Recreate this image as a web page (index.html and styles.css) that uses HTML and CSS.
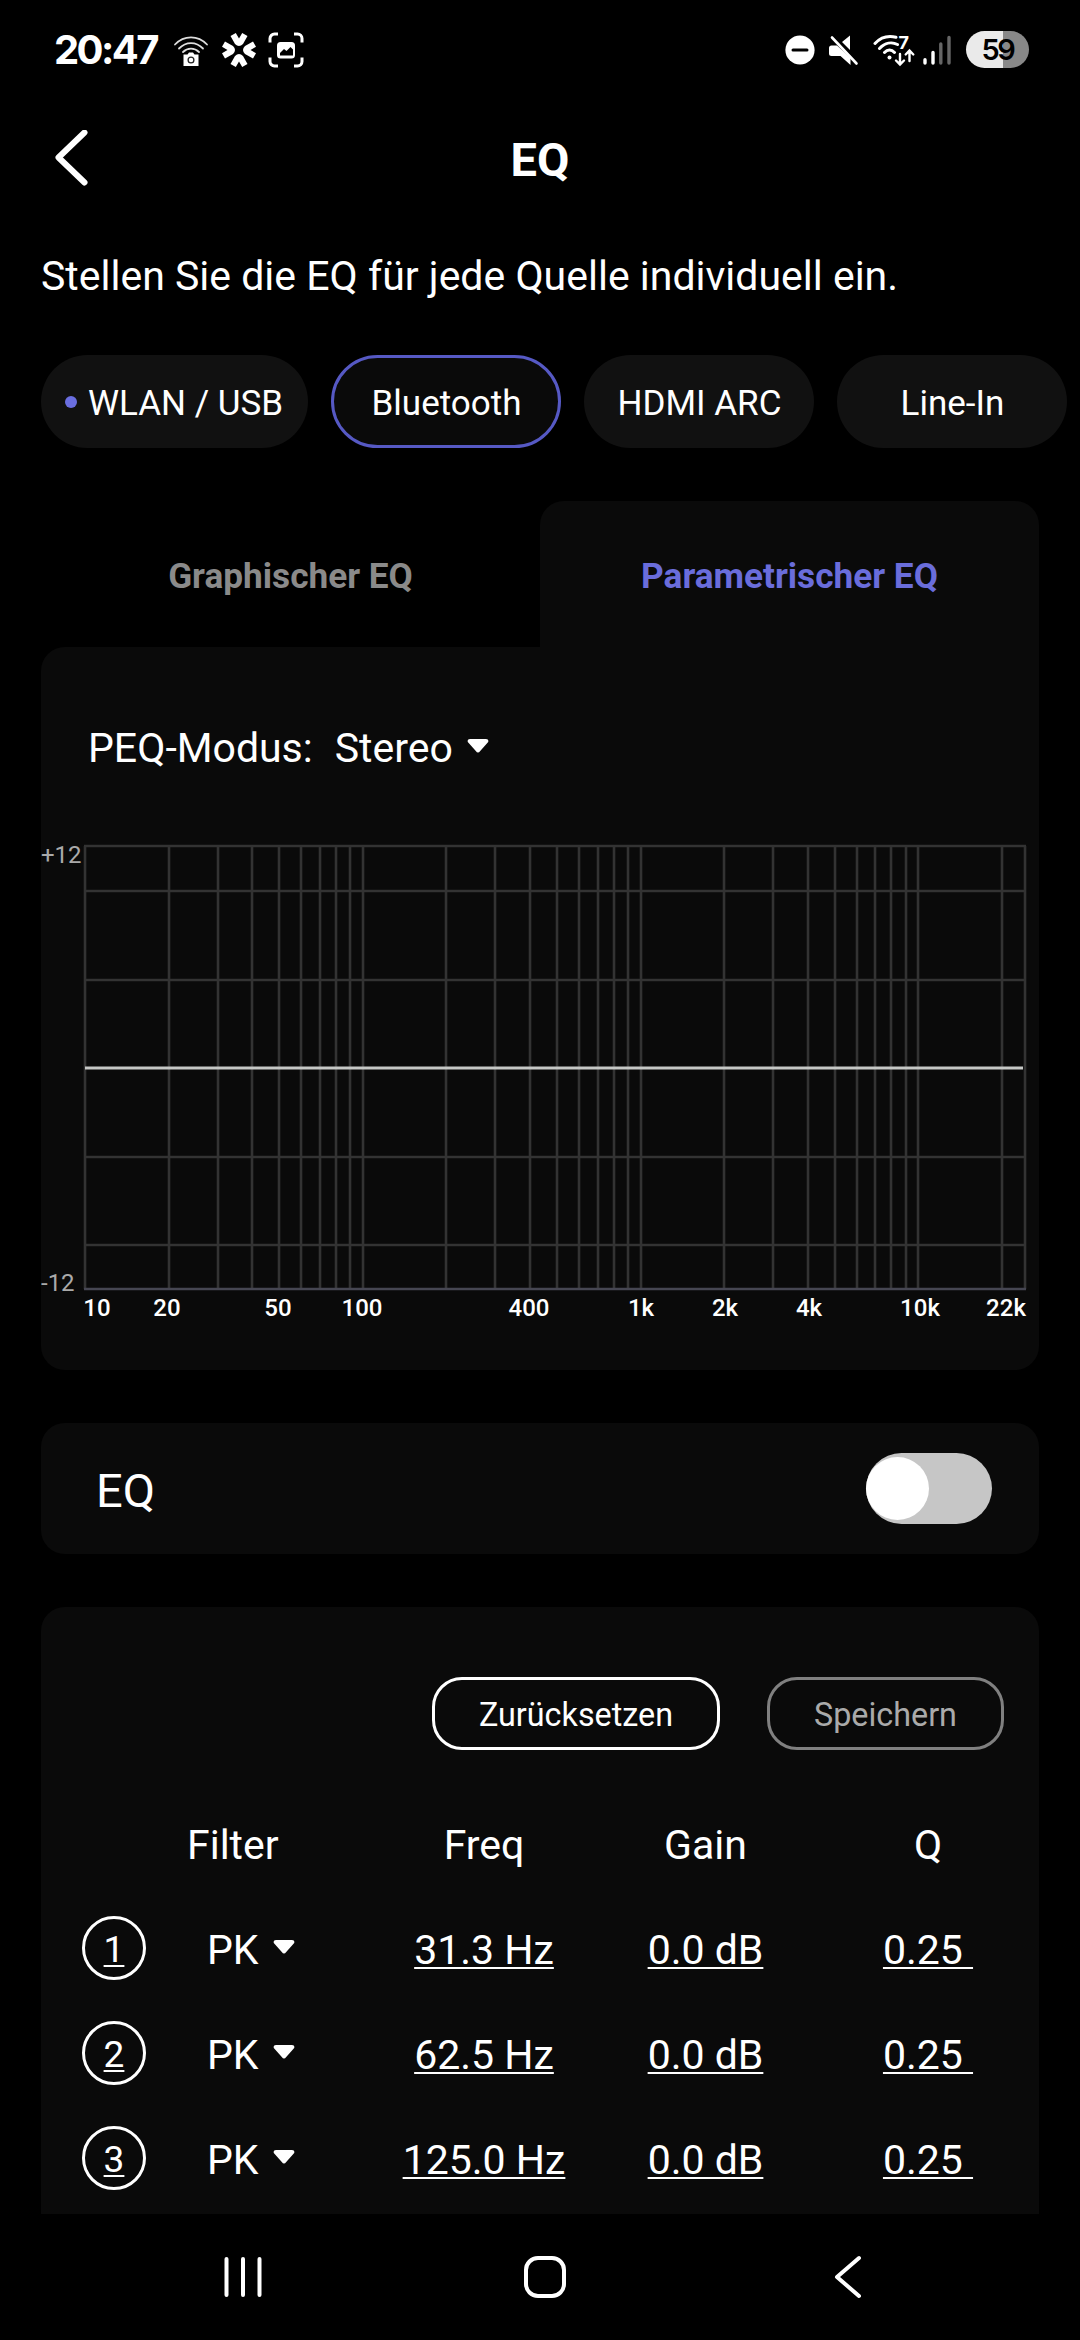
FILE: index.html
```html
<!DOCTYPE html>
<html lang="de">
<head>
    <meta charset="UTF-8">
    <meta name="viewport" content="width=device-width, initial-scale=1.0">
    <title>EQ</title>
    <link rel="stylesheet" href="styles.css">
</head>
<body>
    <!-- Status bar -->
    <div class="status-bar">
        <div class="status-left">
            <span class="clock">20:47</span>
            <svg class="icon-camera" width="36" height="36" viewBox="0 0 36 36" fill="none" stroke="#ddd" stroke-width="1.800" stroke-linecap="round">
                <path d="M2 12.500C11 3 25 3 34 12.500M6 16.500C13 9.300 23 9.300 30 16.500M10 20C14.500 15.500 21.500 15.500 26 20"/>
                <path d="M11 22.500h3.500l1.500-2h4l1.500 2H25.500v11.500H10.500V22.500z" fill="#fff" stroke="none"/>
                <circle cx="18" cy="28" r="2.900" stroke="#222" stroke-width="1.300"/>
            </svg>
            <svg class="icon-star" width="36" height="36" viewBox="0 0 36 36" fill="#fff">
                <path id="arrowhead" d="M9.500 4L14.800 1L18 6.500L21.200 1L26.500 4L22 12Q18 16 14 12Z"/>
                <use href="#arrowhead" transform="rotate(90 18 18)"/>
                <use href="#arrowhead" transform="rotate(180 18 18)"/>
                <use href="#arrowhead" transform="rotate(270 18 18)"/>
            </svg>
            <svg class="icon-capture" width="36" height="36" viewBox="0 0 36 36" fill="none" stroke="#fff" stroke-width="3">
                <path d="M2 10.500V6.500a4.500 4.500 0 0 1 4.500-4.500H10M26 2h3.500A4.500 4.500 0 0 1 34 6.500v4M34 25.500v4a4.500 4.500 0 0 1-4.500 4.500H26M10 34H6.500A4.500 4.500 0 0 1 2 29.500v-4"/>
                <rect x="9" y="10" width="18" height="16.500" rx="3.500" fill="#fff" stroke="none"/>
                <path d="M12 23.500v-2.500l4-4 2.500 2 4-4 2.500 2.500v6z" fill="#000" stroke="none"/>
            </svg>
        </div>
        <div class="status-right">
            <svg class="icon-dnd" width="30" height="36" viewBox="0 0 30 36">
                <circle cx="15" cy="18" r="14.600" fill="#fff"/>
                <path d="M8 18h14" stroke="#000" stroke-width="3" stroke-linecap="round"/>
            </svg>
            <svg class="icon-mute" width="32" height="36" viewBox="0 0 32 36" fill="#fff">
                <path d="M1 16a2.500 2.500 0 0 1 2.500-2.500H9L22.500 26v7L12.500 24H3.500A2.500 2.500 0 0 1 1 21.500zM14 10l8-6.500V18z"/>
                <path d="M4 5.500L28.500 31.500" stroke="#fff" stroke-width="2.600" stroke-linecap="round"/>
            </svg>
            <svg class="icon-wifi" width="42" height="36" viewBox="0 0 42 36" fill="none" stroke="#fff" stroke-width="3" stroke-linecap="round">
                <path d="M2 11.500C8 5 15 3.300 23 5.300M6.500 16.500C12 10.700 19 9.700 24.500 12.500M11.500 20.500C14.500 17.300 18.500 17.300 21.500 20.500"/>
                <circle cx="16.500" cy="25.500" r="2" fill="#fff" stroke="none"/>
                <path d="M27 22v10M23 28.500l4 4 4-4M36.500 29V19M32.700 22.500l3.800-4 3.800 4" stroke-width="2.400"/>
                <text x="25.500" y="16.500" class="wifi-gen">7</text>
            </svg>
            <svg class="icon-signal" width="30" height="36" viewBox="0 0 30 36" fill="none" stroke-width="3.400" stroke-linecap="round">
                <path d="M3 27.700v3.300M11 20.500V31" stroke="#fff"/>
                <path d="M18.800 12V31M27 5.500V31" stroke="#666"/>
            </svg>
            <div class="battery">59</div>
        </div>
    </div>

    <header class="header">
        <svg class="back" width="36" height="60" viewBox="0 0 36 60" fill="none" stroke="#fff" stroke-width="6" stroke-linecap="round" stroke-linejoin="round">
            <path d="M29.500 2.500L3.500 27.500L29.500 52.500"/>
        </svg>
        <h1>EQ</h1>
    </header>

    <p class="intro">Stellen Sie die EQ für jede Quelle individuell ein.</p>

    <!-- Sources -->
    <div class="sources">
        <button class="source source-wide"><span class="dot"></span>WLAN / USB</button>
        <button class="source active">Bluetooth</button>
        <button class="source">HDMI ARC</button>
        <button class="source">Line-In</button>
    </div>

    <!-- EQ type tabs -->
    <div class="tabs">
        <div class="tab">Graphischer EQ</div>
        <div class="tab active">Parametrischer EQ</div>
    </div>

    <section class="graph-panel">
        <div class="mode">
            <span>PEQ-Modus:</span>
            <span class="mode-value">Stereo</span>
            <svg class="caret" width="22" height="14" viewBox="0 0 22 14"><path d="M3 0h16q3 0 2.200 3l-8 9q-2.200 3-4.400 0l-8-9Q0 0 3 0z"/></svg>
        </div>
        <svg class="chart" width="998" height="500" viewBox="0 0 998 500">
            <path class="grid" d="M44 8V451M128 8V451M177 8V451M211 8V451M238 8V451M260 8V451M279 8V451M295 8V451M309 8V451"/>
            <path class="grid" d="M322 8V451M405 8V451M454 8V451M489 8V451M516 8V451M538 8V451M557 8V451M573 8V451M587 8V451"/>
            <path class="grid" d="M600 8V451M683 8V451M732 8V451M767 8V451M794 8V451M816 8V451M834 8V451M850 8V451M865 8V451"/>
            <path class="grid" d="M877 8V451M961 8V451M984 8V451"/>
            <path class="grid" d="M43 8H985M44 53H984M44 142H984M44 319H984M44 407H984"/>
            <path class="axis" d="M43 451H985"/>
            <path class="curve" d="M44 230H982"/>
            <text class="y-label" x="0" y="25">+12</text>
            <text class="y-label" x="0" y="453">-12</text>
            <g class="x-labels">
                <text x="56" y="478">10</text>
                <text x="126" y="478">20</text>
                <text x="237" y="478">50</text>
                <text x="321" y="478">100</text>
                <text x="488" y="478">400</text>
                <text x="600" y="478">1k</text>
                <text x="684" y="478">2k</text>
                <text x="768" y="478">4k</text>
                <text x="879" y="478">10k</text>
                <text x="965" y="478">22k</text>
            </g>
        </svg>
    </section>

    <section class="switch-panel">
        <span class="switch-label">EQ</span>
        <div class="toggle"><div class="knob"></div></div>
    </section>

    <section class="filter-panel">
        <div class="actions">
            <button class="action">Zurücksetzen</button>
            <button class="action disabled">Speichern</button>
        </div>
        <div class="row row-head">
            <span></span>
            <span>Filter</span>
            <span class="center">Freq</span>
            <span class="center">Gain</span>
            <span class="center">Q</span>
        </div>
        <div class="row">
            <span class="number">1</span>
            <span class="type">PK<svg class="caret" width="22" height="14" viewBox="0 0 22 14"><path d="M3 0h16q3 0 2.200 3l-8 9q-2.200 3-4.400 0l-8-9Q0 0 3 0z"/></svg></span>
            <span class="center value">31.3 Hz</span>
            <span class="center value">0.0 dB</span>
            <span class="center value">0.25&nbsp;</span>
        </div>
        <div class="row">
            <span class="number">2</span>
            <span class="type">PK<svg class="caret" width="22" height="14" viewBox="0 0 22 14"><path d="M3 0h16q3 0 2.200 3l-8 9q-2.200 3-4.400 0l-8-9Q0 0 3 0z"/></svg></span>
            <span class="center value">62.5 Hz</span>
            <span class="center value">0.0 dB</span>
            <span class="center value">0.25&nbsp;</span>
        </div>
        <div class="row">
            <span class="number">3</span>
            <span class="type">PK<svg class="caret" width="22" height="14" viewBox="0 0 22 14"><path d="M3 0h16q3 0 2.200 3l-8 9q-2.200 3-4.400 0l-8-9Q0 0 3 0z"/></svg></span>
            <span class="center value">125.0 Hz</span>
            <span class="center value">0.0 dB</span>
            <span class="center value">0.25&nbsp;</span>
        </div>
    </section>

    <!-- Android navigation -->
    <nav class="nav-bar">
        <svg width="42" height="44" viewBox="0 0 42 44" stroke="#fff" stroke-width="4" stroke-linecap="round">
            <path d="M4.500 4V40M21 4V40M37.500 4V40"/>
        </svg>
        <svg class="nav-home" width="44" height="44" viewBox="0 0 44 44" fill="none" stroke="#fff" stroke-width="4">
            <rect x="3" y="3" width="38" height="38" rx="12"/>
        </svg>
        <svg class="nav-back" width="30" height="44" viewBox="0 0 30 44" fill="none" stroke="#fff" stroke-width="4" stroke-linecap="round" stroke-linejoin="round">
            <path d="M26 3L4 22L26 41"/>
        </svg>
    </nav>
</body>
</html>
```

FILE: styles.css
```css
* {
    box-sizing: border-box;
}

body {
    margin: 0;
    height: 2340px;
    overflow: hidden;
    display: flex;
    flex-direction: column;
    background-color: #000;
    color: #fff;
    font-family: Roboto, sans-serif;
    font-size: 41px;
}

button {
    font-family: inherit;
    color: inherit;
    border: none;
}

/* Status bar */
.status-bar {
    height: 99px;
    padding: 0 51px 0 54px;
    display: flex;
    justify-content: space-between;
    align-items: center;
    flex-shrink: 0;
}

.status-left,
.status-right {
    display: flex;
    align-items: center;
}

.clock {
    width: 119px;
    font-family: Inter, sans-serif;
    font-size: 40px;
    font-weight: 700;
    letter-spacing: -2.6px;
    white-space: nowrap;
}

.icon-star {
    margin-left: 12px;
}

.icon-capture {
    margin-left: 11px;
}

.icon-mute {
    margin-left: 13px;
}

.icon-wifi {
    margin-left: 13px;
}

.wifi-gen {
    font-family: Inter, sans-serif;
    font-size: 18px;
    font-weight: 700;
    fill: #fff;
    stroke: none;
}

.icon-signal {
    margin-left: 7px;
}

.battery {
    width: 63px;
    height: 37px;
    margin-left: 14px;
    border-radius: 19px;
    background: linear-gradient(to right, #eaeaea 37px, #888 37px);
    color: #000;
    font-family: Inter, sans-serif;
    font-size: 29px;
    font-weight: 600;
    letter-spacing: -2.5px;
    line-height: 37px;
    text-align: center;
}

/* Header */
.header {
    height: 121px;
    padding: 0 55px;
    display: grid;
    grid-template-columns: 1fr auto 1fr;
    align-items: center;
    flex-shrink: 0;
}

h1 {
    margin: 0;
    font-size: 47px;
    font-weight: 700;
}

.intro {
    margin: 26px 0 0 41px;
    font-size: 41px;
    line-height: 60px;
}

/* Source buttons */
.sources {
    display: flex;
    gap: 23px;
    margin: 49px 0 0 41px;
    flex-shrink: 0;
}

.source {
    width: 230px;
    height: 93px;
    padding: 3px 0 0 1px;
    display: flex;
    justify-content: center;
    align-items: center;
    flex-shrink: 0;
    border-radius: 47px;
    background-color: #111;
    font-size: 35px;
}

.source.active {
    border: 3px solid #5659c4;
    background-color: #0a0a0a;
}

.source-wide {
    width: 267px;
    padding: 3px 1px 0 0;
}

.dot {
    width: 12px;
    height: 12px;
    margin: 0 11px 3px 0;
    border-radius: 50%;
    background-color: #6a6ee0;
}

/* Tabs */
.tabs {
    display: flex;
    margin: 53px 41px 0;
    flex-shrink: 0;
}

.tab {
    width: 499px;
    height: 146px;
    padding-top: 2px;
    line-height: 146px;
    text-align: center;
    font-size: 35.2px;
    font-weight: 700;
    color: #8a8a8a;
}

.tab.active {
    border-radius: 24px 24px 0 0;
    background-color: #0a0a0a;
    color: #6a6ddb;
}

/* Graph */
.graph-panel {
    height: 723px;
    margin: 0 41px;
    padding-top: 61px;
    flex-shrink: 0;
    border-radius: 24px 0 24px 24px;
    background-color: #0a0a0a;
}

.mode {
    height: 80px;
    padding-left: 47px;
    display: flex;
    align-items: center;
}

.mode-value {
    margin-left: 22px;
}

.caret {
    margin: 0 0 5px 14px;
    fill: #fff;
}

.chart {
    display: block;
    margin-top: 50px;
}

.grid {
    fill: none;
    stroke: #333;
    stroke-width: 2.6;
}

.axis {
    stroke: #464652;
    stroke-width: 2.6;
}

.curve {
    stroke: #c6c8c6;
    stroke-width: 3;
}

.y-label {
    font-size: 24px;
    fill: #aaa;
}

.x-labels {
    font-size: 24px;
    font-weight: 500;
    text-anchor: middle;
    fill: #fff;
}

/* EQ on / off */
.switch-panel {
    height: 131px;
    margin: 53px 41px 0;
    padding: 0 47px 0 55px;
    display: flex;
    justify-content: space-between;
    align-items: center;
    flex-shrink: 0;
    border-radius: 24px;
    background-color: #0a0a0a;
    font-size: 47px;
}

.switch-label {
    padding-top: 3px;
}

.toggle {
    width: 126px;
    height: 71px;
    display: flex;
    align-items: center;
    border-radius: 36px;
    background-color: #c6c6c6;
}

.knob {
    width: 63px;
    height: 63px;
    border-radius: 50%;
    background-color: #fff;
}

/* Filter list */
.filter-panel {
    height: 607px;
    margin: 53px 41px 0;
    padding-top: 70px;
    flex-shrink: 0;
    border-radius: 24px 24px 0 0;
    background-color: #0a0a0a;
}

.actions {
    display: flex;
    justify-content: flex-end;
    gap: 47px;
    padding-right: 35px;
}

.action {
    width: 288px;
    height: 73px;
    padding: 3px 0 0;
    border: 3px solid #fff;
    border-radius: 30px;
    background: none;
    font-size: 32.3px;
}

.action.disabled {
    width: 237px;
    border-color: #808080;
    color: #aaa;
}

.row {
    height: 105px;
    display: grid;
    grid-template-columns: 146px 187px 220px 223px 222px;
    align-items: center;
}

.row-head {
    height: 100px;
    margin: 45px 0 2px;
}

.center {
    text-align: center;
}

.number {
    width: 64px;
    height: 64px;
    margin: 0 0 4px 41px;
    border: 3px solid #fff;
    border-radius: 50%;
    font-size: 37px;
    line-height: 61px;
    text-align: center;
}

.number,
.value {
    text-decoration: underline;
    text-decoration-thickness: 2px;
    text-decoration-skip-ink: none;
    text-underline-offset: 3px;
}

.type {
    display: flex;
    align-items: center;
    padding-left: 20px;
}

/* Navigation bar */
.nav-bar {
    height: 126px;
    padding-left: 222px;
    display: flex;
    align-items: center;
    flex-shrink: 0;
}

.nav-home {
    margin-left: 259px;
}

.nav-back {
    margin-left: 266px;
}
```
